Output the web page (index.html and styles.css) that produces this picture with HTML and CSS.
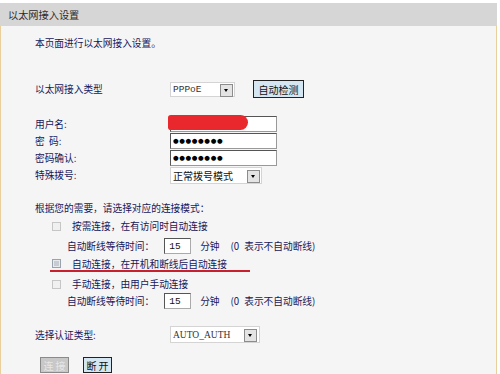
FILE: index.html
```html
<!DOCTYPE html>
<html lang="zh-CN">
<head>
  <meta charset="UTF-8" />
  <title>以太网接入设置</title>
  <link rel="stylesheet" href="styles.css">
</head>
<body>
  <div class="panel">
    <div class="head">以太网接入设置</div>
    <div class="content">
      <div class="row intro">本页面进行以太网接入设置。</div>

      <div class="row type-row">
        <span class="label">以太网接入类型</span>
        <div class="select sel-type"><span class="val mono">PPPoE</span><span class="arrow"></span></div>
        <button class="btn detect">自动检测</button>
      </div>

      <div class="row field user-row">
        <span class="label">用户名:</span>
        <span class="field-wrap">
          <input class="text" type="text" value="">
          <span class="scribble"></span>
        </span>
      </div>
      <div class="row field">
        <span class="label">密&nbsp; 码:</span>
        <input class="text pass" type="text" value="●●●●●●●●">
      </div>
      <div class="row field">
        <span class="label">密码确认:</span>
        <input class="text pass" type="text" value="●●●●●●●●">
      </div>
      <div class="row field">
        <span class="label">特殊拨号:</span>
        <div class="select sel-special"><span class="val">正常拨号模式</span><span class="arrow"></span></div>
      </div>

      <div class="row hint">根据您的需要，请选择对应的连接模式：</div>

      <div class="row opt">
        <span class="check"></span>
        <span>按需连接，在有访问时自动连接</span>
      </div>
      <div class="row wait first">
        <span>自动断线等待时间：</span>
        <input class="time" type="text" value="15">
        <span>分钟</span>
        <span class="paren">(0</span>
        <span class="note">表示不自动断线)</span>
      </div>
      <div class="row opt marked">
        <span class="mark">
          <span class="check on"></span>
          <span>自动连接，在开机和断线后自动连接</span>
        </span>
      </div>
      <div class="row opt manual">
        <span class="check"></span>
        <span>手动连接，由用户手动连接</span>
      </div>
      <div class="row wait second">
        <span>自动断线等待时间：</span>
        <input class="time" type="text" value="15">
        <span>分钟</span>
        <span class="paren">(0</span>
        <span class="note">表示不自动断线)</span>
      </div>

      <div class="row auth-row">
        <span class="label">选择认证类型:</span>
        <div class="select sel-auth"><span class="val serif">AUTO_AUTH</span><span class="arrow"></span></div>
      </div>

      <div class="row actions">
        <button class="btn off" disabled>连 接</button>
        <button class="btn">断 开</button>
      </div>
    </div>
  </div>
</body>
</html>
```

FILE: styles.css
```css
body {
  margin: 0;
  background: #fff;
  font-family: "Noto Sans CJK SC", "DejaVu Sans", sans-serif;
  font-size: 9.7px;
  color: #17175a;
  overflow: hidden;
}
.panel {
  margin-top: 3px;
  width: 497px;
}
.head {
  height: 23px;
  line-height: 23px;
  background: #d6d6d6;
  padding-left: 8px;
  color: #2a2a2a;
  font-size: 10.2px;
}
.content {
  background: #f5f5f5;
  border-left: 1px solid #e9cf9c;
  border-right: 1px solid #e9cf9c;
  padding: 10px 0 0 34px;
  height: 348px;
  box-sizing: border-box;
}
.row {
  display: flex;
  align-items: center;
  height: 14px;
}
.label {
  width: 135px;
  flex: none;
}
.type-row {
  margin-top: 30px;
  height: 18px;
}
.select {
  position: relative;
  background: #fff;
  border: 1px solid #d4d4d4;
  height: 15px;
  display: flex;
  align-items: center;
  padding-left: 2px;
  box-sizing: border-box;
}
.val {
  color: #111;
}
.mono {
  font-family: "Liberation Mono", monospace;
  font-size: 9.5px;
  color: #333;
}
.serif {
  font-family: "Liberation Serif", serif;
  font-size: 9.5px;
  color: #333;
}
.arrow {
  position: absolute;
  right: 1px;
  top: 1px;
  width: 11px;
  height: 11px;
  background: #e4e4e4;
  border: 1px solid #8c8c8c;
}
.arrow::after {
  content: "";
  position: absolute;
  left: 3px;
  top: 4px;
  border-left: 2.5px solid transparent;
  border-right: 2.5px solid transparent;
  border-top: 3px solid #000;
}
.sel-type {
  width: 65px;
}
.sel-special {
  width: 92px;
  height: 17px;
  font-size: 10px;
}
.sel-special .arrow {
  top: 2px;
}
.sel-auth {
  width: 90px;
  height: 17px;
}
.sel-auth .arrow {
  top: 2px;
  right: 2px;
}
.btn {
  font-family: inherit;
  font-size: 10px;
  color: #111;
  background: #d3e6f1;
  border: 1px solid #222;
  padding: 0 2px;
  height: 18px;
  line-height: 15px;
  border-radius: 0;
}
.detect {
  margin-left: 18px;
  width: 51px;
}
.field {
  height: 16px;
  margin-top: 1px;
}
.user-row {
  margin-top: 18px;
}
.field-wrap {
  position: relative;
  display: flex;
}
.text {
  width: 107px;
  height: 16px;
  box-sizing: border-box;
  border: 1px solid #555;
  border-right-color: #999;
  border-bottom-color: #999;
  background: #fff;
  padding: 0 2px;
  margin: 0;
  font-family: "DejaVu Sans", sans-serif;
  font-size: 6.5px;
  letter-spacing: 0.6px;
  color: #000;
}
.pass {
  font-weight: bold;
}
.scribble {
  position: absolute;
  left: -2px;
  top: -1px;
  width: 80px;
  height: 15px;
  background: #e8282c;
  border-radius: 3px 8px 8px 3px;
}
.hint {
  margin-top: 18px;
}
.opt {
  margin-top: 4px;
  padding-left: 17px;
}
.check {
  display: inline-block;
  width: 9px;
  height: 9px;
  border: 1px solid #c6c6c6;
  background: #f0f0f0;
  margin-right: 11px;
  box-sizing: border-box;
}
.check.on {
  border-color: #9aa3ad;
  background: #c7ccd3;
  box-shadow: inset 0 0 0 1px #e8ebee;
}
.wait {
  padding-left: 32px;
  height: 16px;
}
.wait.first {
  margin-top: 5px;
}
.wait.second {
  margin-top: 2px;
}
.time {
  width: 27px;
  height: 16px;
  box-sizing: border-box;
  margin: 0 9px 0 10px;
  border: 1px solid #555;
  border-right-color: #aaa;
  border-bottom-color: #aaa;
  padding: 0 4px;
  font-family: "Liberation Mono", monospace;
  font-size: 9.5px;
  color: #111;
}
.paren {
  margin-left: 11px;
}
.note {
  margin-left: 5px;
}
.marked {
  margin-top: 3px;
  height: auto;
  padding-left: 15px;
}
.mark {
  display: flex;
  align-items: center;
  border-bottom: 2px solid #c8202c;
  padding: 0 4px 0 2px;
  width: 194px;
  height: 13px;
}
.manual {
  margin-top: 5px;
}
.auth-row {
  margin-top: 17px;
  height: 17px;
}
.actions {
  margin-top: 14px;
  height: 16px;
  padding-left: 5px;
}
.actions .btn {
  height: 16px;
  width: 29px;
  line-height: 13px;
  margin-right: 14px;
  padding: 0;
}
.btn.off {
  background: #c8c8c8;
  color: #e6e6e6;
  border-color: #8a8a8a;
}
```
